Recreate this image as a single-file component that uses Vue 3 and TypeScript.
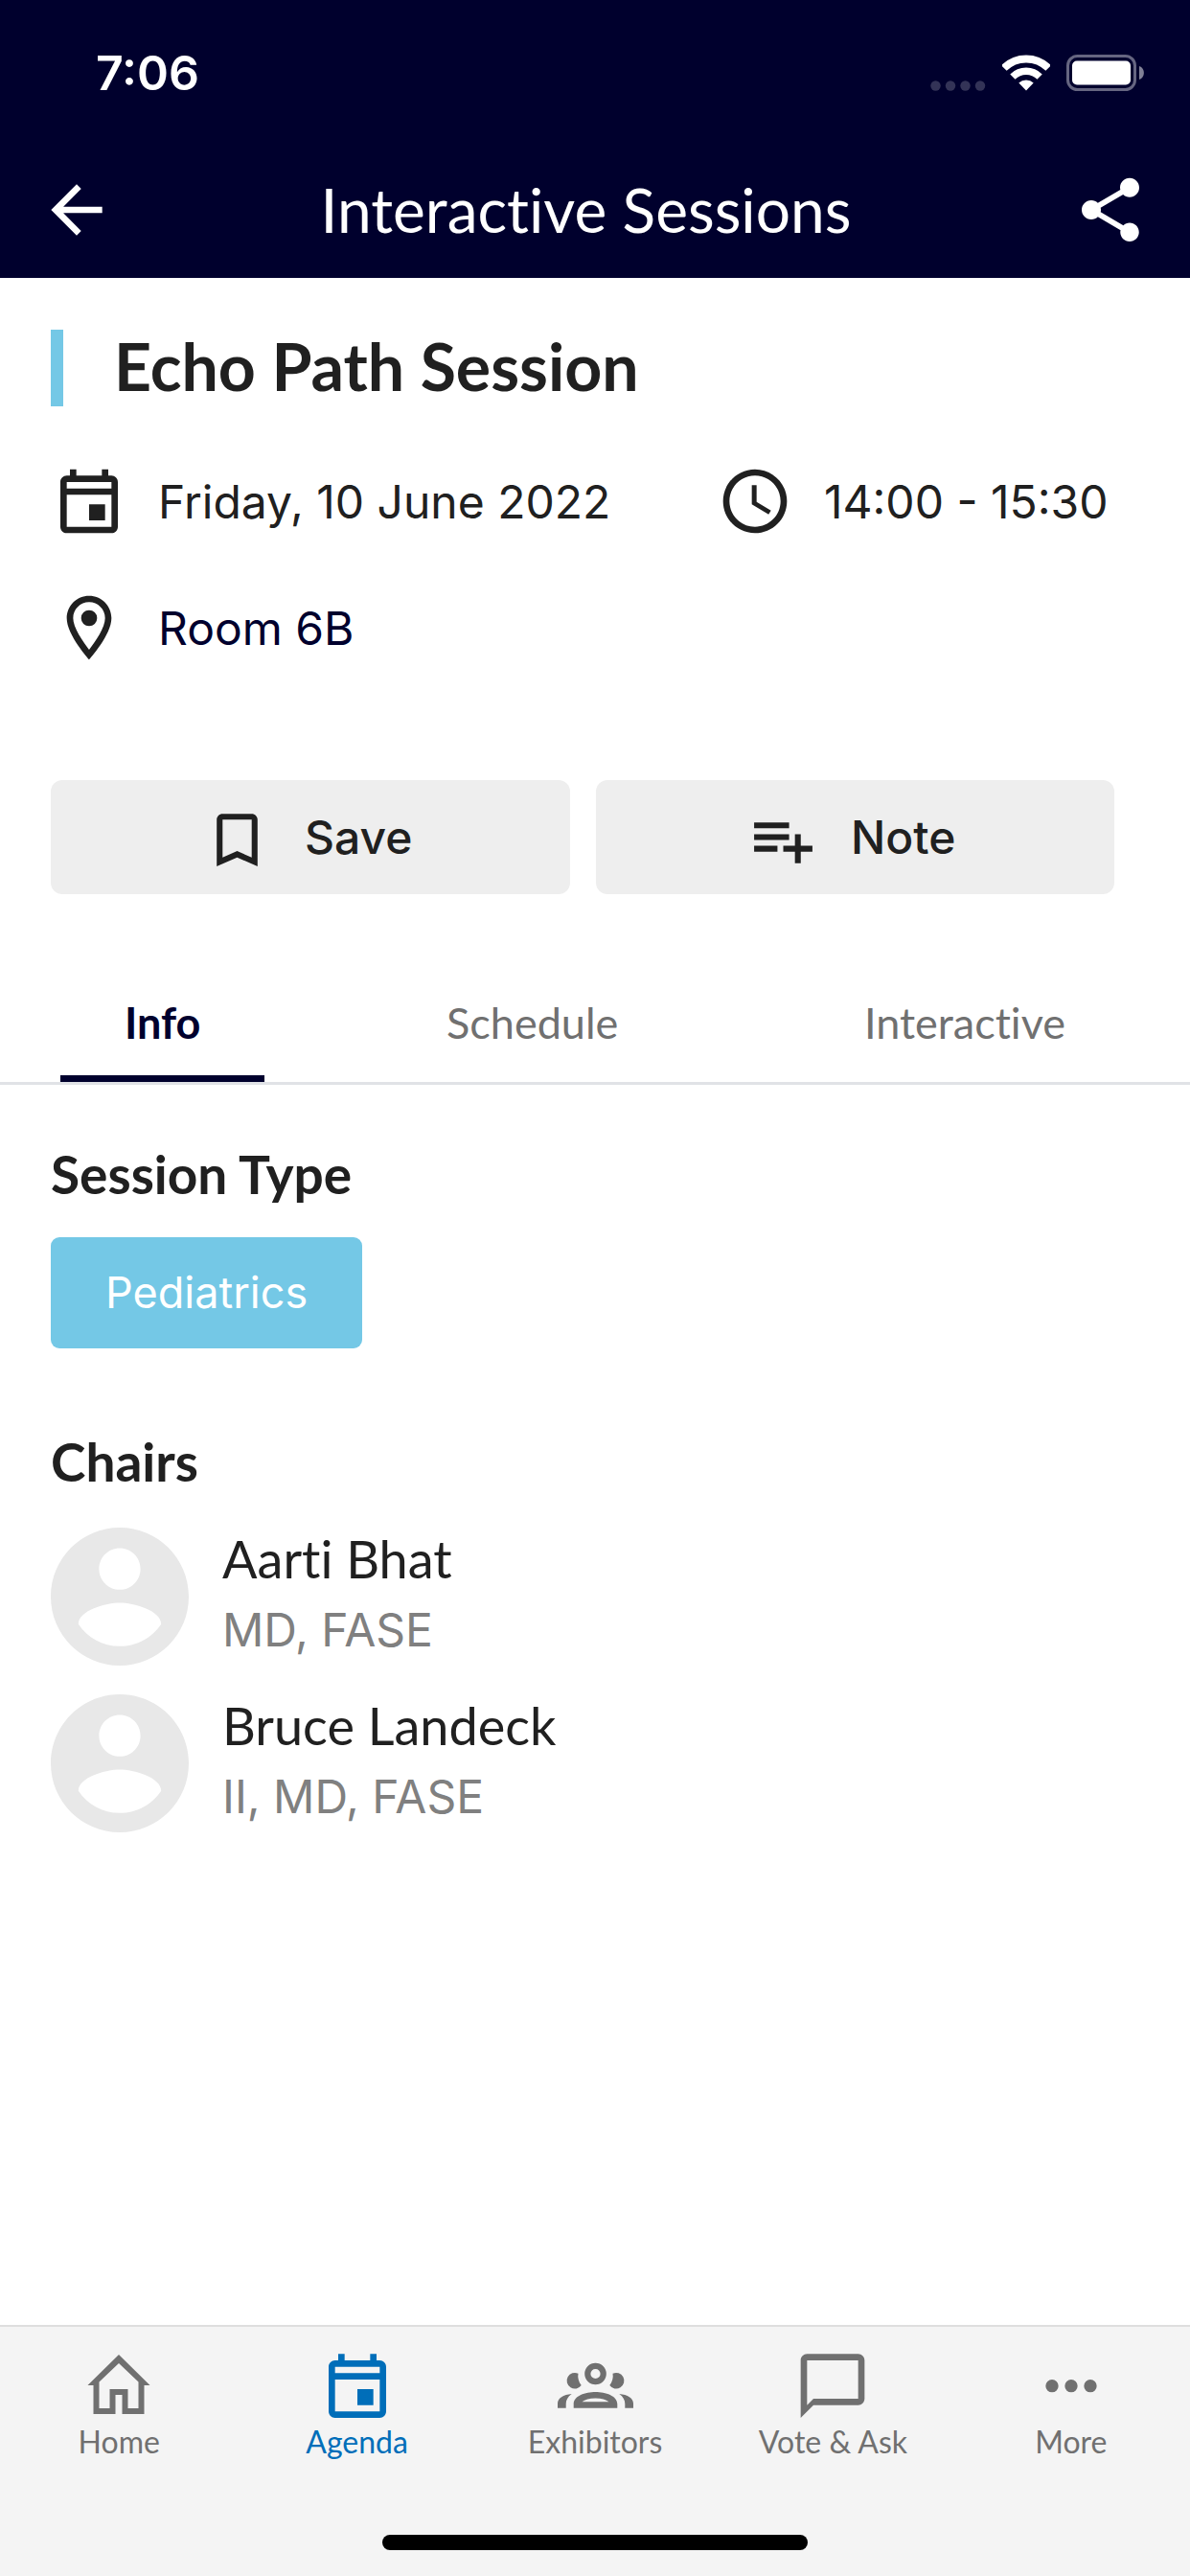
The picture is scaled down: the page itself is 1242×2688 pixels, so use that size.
<script setup lang="ts">
import { ref } from 'vue'

interface Chair {
  name: string
  credentials: string
}

interface NavItem {
  label: string
  viewBox: string
  icon: string
}

const tabs: string[] = ['Info', 'Schedule', 'Interactive']
const activeTab = ref('Info')

const chairs: Chair[] = [
  { name: 'Aarti Bhat', credentials: 'MD, FASE' },
  { name: 'Bruce Landeck', credentials: 'II, MD, FASE' },
]

const eventIcon =
  'M19 3h-1V1h-2v2H8V1H6v2H5c-1.1 0-2 .9-2 2v14c0 1.1.9 2 2 2h14c1.1 0 2-.9 2-2V5c0-1.1-.9-2-2-2zm0 2v2H5V5h14zM5 19V9h14v10H5zm7-7h5v5h-5z'

const navItems: NavItem[] = [
  {
    label: 'Home',
    viewBox: '0 0 80 80',
    icon: 'M40 4L7.5 36H13.500V66H36.500V46H43.500V66H66.500V36H72.500L40 4ZM40 13L60.500 32.500V60H49.500V40H30.500V60H19.500V32.500Z',
  },
  { label: 'Agenda', viewBox: '0 0 24 24', icon: eventIcon },
  {
    label: 'Exhibitors',
    viewBox: '0 0 80 80',
    icon:
      'M40.500 12.700a11.300 11.300 0 1 0 0 22.600a11.300 11.300 0 1 0 0-22.600ZM40.500 18.900a5.100 5.100 0 1 1 0 10.200a5.100 5.100 0 1 1 0-10.200Z' +
      'M17.700 59.700V55.500C17.700 47 30 43 40.500 43S63.300 47 63.300 55.500V59.700ZM26.500 53.200C29.500 51 34 49.400 40.500 49.400S51.500 51 54.500 53.200Z' +
      'M22.500 23.800A8.300 8.300 0 1 0 25.700 36C23 32.500 21.600 28 22.500 23.800Z' +
      'M58.500 23.800A8.300 8.300 0 1 1 55.300 36C58 32.500 59.400 28 58.500 23.800Z' +
      'M1 59.700V55C1 49.500 7 45.600 15.700 45C11.500 48 9.700 51.500 9.700 55.500V59.700Z' +
      'M80 59.700V55C80 49.500 74 45.600 65.300 45C69.500 48 71.300 51.500 71.300 55.500V59.700Z',
  },
  {
    label: 'Vote & Ask',
    viewBox: '0 0 24 24',
    icon: 'M20 1H4c-1.100 0-2 .9-2 2v18l4-4h14c1.100 0 2-.9 2-2V3c0-1.100-.9-2-2-2zm0 14H6l-2 2V3h16v12z',
  },
  {
    label: 'More',
    viewBox: '0 0 24 24',
    icon: 'M6 9a2 2 0 1 0 0 4a2 2 0 1 0 0-4zM12 9a2 2 0 1 0 0 4a2 2 0 1 0 0-4zM18 9a2 2 0 1 0 0 4a2 2 0 1 0 0-4z',
  },
]
const activeNav = ref('Agenda')
</script>

<template>
  <div class="screen">
    <header class="header">
      <div class="status">
        <span class="clock">7:06</span>
        <div class="status-icons">
          <svg width="58" height="11" viewBox="0 0 58 11" fill="#fff" fill-opacity=".2" aria-hidden="true">
            <circle cx="5.500" cy="5.500" r="5.200" />
            <circle cx="21" cy="5.500" r="5.200" />
            <circle cx="36.500" cy="5.500" r="5.200" />
            <circle cx="52" cy="5.500" r="5.200" />
          </svg>
          <svg width="50" height="38" viewBox="0 0 50 38" fill="none" stroke="#fff" aria-hidden="true">
            <path d="M1.800 14A32.800 32.800 0 0 1 48.200 14" stroke-width="8" />
            <path d="M10.900 23.100A20 20 0 0 1 39.100 23.100" stroke-width="7.500" />
            <path d="M25 37.500L17.300 29.600A11.300 11.300 0 0 1 32.700 29.600Z" fill="#fff" stroke="none" />
          </svg>
          <svg width="82" height="38" viewBox="0 0 82 38" aria-hidden="true">
            <rect x="1.500" y="1.500" width="70" height="35" rx="10" fill="none" stroke="#fff" stroke-opacity=".4" stroke-width="3" />
            <rect x="6" y="6.500" width="61" height="25" rx="5" fill="#fff" />
            <path d="M76 12C82.500 14 82.500 24 76 26Z" fill="#fff" fill-opacity=".5" />
          </svg>
        </div>
      </div>
      <div class="toolbar">
        <button class="icon-button" type="button" aria-label="Back">
          <svg class="icon" viewBox="0 0 24 24"><path d="M20 11H7.830l5.590-5.590L12 4l-8 8 8 8 1.410-1.410L7.830 13H20v-2z" /></svg>
        </button>
        <h1 class="toolbar-title">Interactive Sessions</h1>
        <button class="icon-button" type="button" aria-label="Share">
          <svg class="icon" viewBox="0 0 24 24">
            <path d="M18 16.080c-.76 0-1.440.3-1.960.77L8.910 12.700c.05-.23.09-.46.09-.7s-.04-.47-.09-.7l7.050-4.110c.54.5 1.250.81 2.040.81 1.660 0 3-1.340 3-3s-1.340-3-3-3-3 1.340-3 3c0 .24.04.47.09.7L8.040 9.810C7.500 9.310 6.790 9 6 9c-1.660 0-3 1.340-3 3s1.340 3 3 3c.79 0 1.500-.31 2.040-.81l7.120 4.160c-.05.21-.08.43-.08.65 0 1.610 1.310 2.920 2.920 2.920s2.920-1.310 2.920-2.920-1.310-2.920-2.920-2.920z" />
          </svg>
        </button>
      </div>
    </header>

    <main>
      <section class="summary">
        <div class="title-row">
          <span class="accent"></span>
          <h2 class="session-title">Echo Path Session</h2>
        </div>
        <div class="facts">
          <div class="fact">
            <svg class="icon" viewBox="0 -1 24 24" aria-hidden="true"><path :d="eventIcon" /></svg>
            <span>Friday, 10 June 2022</span>
          </div>
          <div class="fact">
            <svg class="icon" viewBox="0 0 24 24" aria-hidden="true">
              <path d="M11.990 2C6.470 2 2 6.480 2 12s4.470 10 9.990 10C17.520 22 22 17.520 22 12S17.520 2 11.990 2zM12 20c-4.420 0-8-3.580-8-8s3.580-8 8-8 8 3.580 8 8-3.580 8-8 8zm.5-13H11v6l5.250 3.150.75-1.230-4.500-2.670z" />
            </svg>
            <span>14:00 - 15:30</span>
          </div>
          <div class="fact">
            <svg class="icon" viewBox="0 0 24 24" aria-hidden="true">
              <path d="M12 2C8.130 2 5 5.130 5 9c0 5.250 7 13 7 13s7-7.750 7-13c0-3.870-3.130-7-7-7zM7 9c0-2.760 2.240-5 5-5s5 2.240 5 5c0 2.880-2.880 7.190-5 9.880C9.920 16.210 7 11.850 7 9z" />
              <circle cx="12" cy="9" r="2.500" />
            </svg>
            <a class="room" href="#room">Room 6B</a>
          </div>
        </div>
        <div class="actions">
          <button class="action" type="button">
            <svg class="action-icon" viewBox="0 0 24 24" aria-hidden="true">
              <path d="M17 3H7c-1.100 0-2 .9-2 2v16l7-3 7 3V5c0-1.100-.9-2-2-2zm0 15l-5-2.180L7 18V5h10v13z" />
            </svg>
            Save
          </button>
          <button class="action" type="button">
            <svg class="action-icon" viewBox="0 0 24 24" aria-hidden="true">
              <path d="M14 10H2v2h12v-2zm0-4H2v2h12V6zm4 8v-4h-2v4h-4v2h4v4h2v-4h4v-2h-4zM2 16h8v-2H2v2z" />
            </svg>
            Note
          </button>
        </div>
      </section>

      <div class="tabs" role="tablist">
        <button
          v-for="tab in tabs"
          :key="tab"
          class="tab"
          :class="{ active: tab === activeTab }"
          type="button"
          role="tab"
          :aria-selected="tab === activeTab"
          @click="activeTab = tab"
        >
          {{ tab }}
        </button>
      </div>

      <section class="details">
        <h3 class="heading">Session Type</h3>
        <span class="tag">Pediatrics</span>
        <h3 class="heading chairs-heading">Chairs</h3>
        <ul class="chairs">
          <li v-for="chair in chairs" :key="chair.name" class="chair">
            <svg class="avatar" viewBox="2 2 20 20" aria-hidden="true">
              <path d="M12 2C6.480 2 2 6.480 2 12s4.480 10 10 10 10-4.480 10-10S17.520 2 12 2zm0 3c1.660 0 3 1.340 3 3s-1.340 3-3 3-3-1.340-3-3 1.340-3 3-3zm0 14.200c-2.500 0-4.710-1.280-6-3.220.03-1.990 4-3.080 6-3.080 1.990 0 5.970 1.090 6 3.080-1.290 1.940-3.500 3.220-6 3.220z" />
            </svg>
            <div class="chair-text">
              <span class="chair-name">{{ chair.name }}</span>
              <span class="chair-credentials">{{ chair.credentials }}</span>
            </div>
          </li>
        </ul>
      </section>
    </main>

    <footer class="footer">
      <nav class="nav">
        <a
          v-for="item in navItems"
          :key="item.label"
          class="nav-item"
          :class="{ current: item.label === activeNav }"
          href="#"
          @click.prevent="activeNav = item.label"
        >
          <svg class="icon" :viewBox="item.viewBox" aria-hidden="true"><path fill-rule="evenodd" :d="item.icon" /></svg>
          <span class="nav-label">{{ item.label }}</span>
        </a>
      </nav>
      <div class="home-indicator"></div>
    </footer>
  </div>
</template>

<style>
body {
  margin: 0;
  background: #fff;
}
</style>

<style scoped>
.screen {
  display: flex;
  flex-direction: column;
  min-height: 100vh;
  color: #202020;
  font-family: Inter, "Liberation Sans", sans-serif;
  font-size: 48px;
}

h1,
h2,
h3,
ul {
  margin: 0;
  padding: 0;
}

button {
  padding: 0;
  border: 0;
  background: none;
  color: inherit;
  font: inherit;
  cursor: pointer;
}

a {
  color: inherit;
  text-decoration: none;
}

svg {
  display: block;
  flex: none;
}

.icon {
  width: 80px;
  height: 80px;
  fill: currentColor;
}

.header {
  background: #00002d;
  color: #fff;
}

.status {
  display: flex;
  align-items: center;
  justify-content: space-between;
  box-sizing: border-box;
  height: 148px;
  padding: 4px 47px 0 100px;
}

.clock {
  font-size: 50px;
  font-weight: 600;
}

.status-icons {
  display: flex;
  align-items: flex-end;
  gap: 17px;
}

.toolbar {
  display: flex;
  align-items: center;
  height: 142px;
  padding: 0 43px 0 40px;
}

.toolbar-title {
  flex: 1;
  padding-right: 16px;
  font: 400 64px/76px Lato, "Liberation Sans", sans-serif;
  font-variant-ligatures: none;
  text-align: center;
}

.summary {
  padding: 54px 79px 0 53px;
}

.title-row {
  display: flex;
  gap: 53px;
}

.accent {
  width: 13px;
  height: 80px;
  background: #74c8e6;
}

.session-title {
  font: 700 68px/76px Lato, "Liberation Sans", sans-serif;
}

.facts {
  display: grid;
  grid-template-columns: 695fr 415fr;
  row-gap: 52px;
  margin-top: 59px;
}

.fact {
  display: flex;
  align-items: center;
  gap: 32px;
  white-space: nowrap;
}

.room {
  color: #00002d;
}

.actions {
  display: flex;
  gap: 27px;
  margin-top: 119px;
}

.action {
  display: flex;
  flex: 1;
  align-items: center;
  justify-content: center;
  gap: 34px;
  height: 119px;
  padding-right: 6px;
  border-radius: 12px;
  background: #eee;
  font-weight: 500;
}

.action-icon {
  width: 73px;
  height: 73px;
  margin-top: 6px;
  fill: currentColor;
}

.tabs {
  display: flex;
  justify-content: space-between;
  margin-top: 78px;
  padding: 0 63px;
  border-bottom: 3px solid #e0e2e6;
}

.tab {
  height: 118px;
  padding: 0 67px;
  border-bottom: 7px solid transparent;
  color: #707070;
  font: 400 45px/54px Lato, "Liberation Sans", sans-serif;
  font-variant-ligatures: none;
}

.tab.active {
  border-color: #00002d;
  color: #00002d;
  font-weight: 700;
}

.details {
  padding: 60px 53px;
}

.heading {
  margin-bottom: 33px;
  font: 700 55px/66px Lato, "Liberation Sans", sans-serif;
}

.tag {
  display: inline-block;
  padding: 0 57px;
  border-radius: 9px;
  background: #74c8e6;
  color: #fff;
  font-size: 45px;
  line-height: 116px;
  vertical-align: top;
}

.chairs-heading {
  margin-top: 85px;
}

.chairs {
  display: flex;
  flex-direction: column;
  gap: 30px;
  padding-top: 3px;
  list-style: none;
}

.chair {
  display: flex;
  gap: 35px;
}

.avatar {
  width: 144px;
  height: 144px;
  fill: #e8e8e8;
}

.chair-text {
  display: flex;
  flex-direction: column;
  gap: 12px;
}

.chair-name {
  font: 400 54px/66px Lato, "Liberation Sans", sans-serif;
  font-variant-ligatures: none;
}

.chair-credentials {
  color: #808080;
  line-height: 58px;
}

.footer {
  margin-top: auto;
  padding: 25px 0 27px;
  border-top: 2px solid #dedede;
  background: #f4f4f4;
}

.nav {
  display: flex;
}

.nav-item {
  display: flex;
  flex: 1 1 0;
  flex-direction: column;
  align-items: center;
  color: #707070;
}

.nav-item.current {
  color: #006eb9;
}

.nav-label {
  font: 400 32px/30px Lato, "Liberation Sans", sans-serif;
  font-variant-ligatures: none;
  white-space: nowrap;
}

.home-indicator {
  width: 444px;
  height: 16px;
  margin: 82px auto 0;
  border-radius: 8px;
  background: #000;
}
</style>
